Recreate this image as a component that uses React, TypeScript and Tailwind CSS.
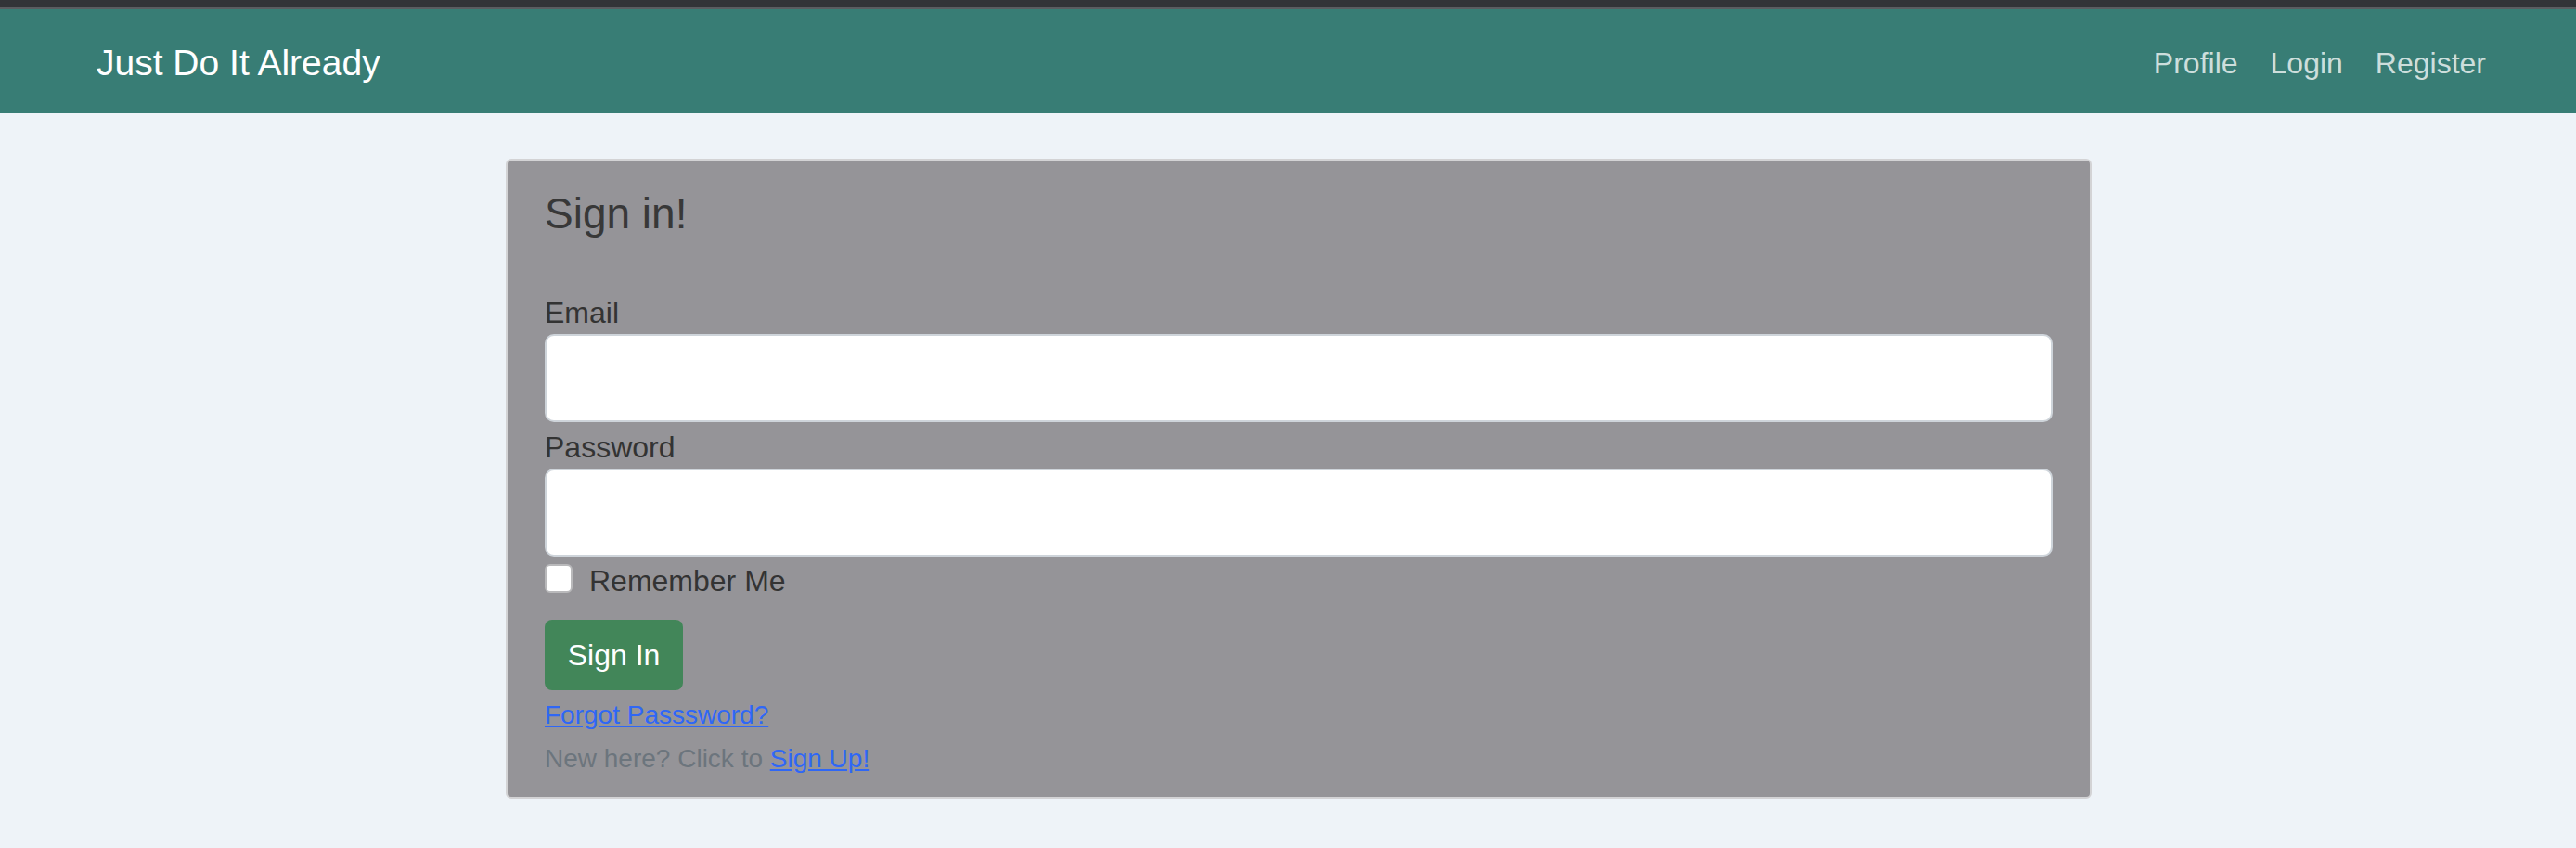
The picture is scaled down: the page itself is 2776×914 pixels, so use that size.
import React, { useState } from "react";

export default function App() {
  const [remember, setRemember] = useState(false);

  return (
    <div
      className="min-h-screen bg-[#eef3f8] text-[#333333]"
      style={{ fontFamily: '"Liberation Sans", Arial, sans-serif' }}
    >
      {/* top strip + navbar */}
      <div className="h-[8px] bg-[#323438]" />
      <div className="h-[2px] bg-[#5a5d61]" />
      <nav className="flex h-[112px] items-center justify-between bg-[#387d75] pt-[4px] pl-[104px] pr-[97px]">
        <a href="#" className="text-[39px] leading-[60px] text-white">
          Just Do It Already
        </a>
        <div className="flex gap-[35px] text-[32px] leading-[48px] text-white/75">
          <a href="#">Profile</a>
          <a href="#">Login</a>
          <a href="#">Register</a>
        </div>
      </nav>

      {/* sign in card */}
      <div className="ml-[545px] mt-[49px] w-[1709px] rounded-[6px] border-2 border-[#d3d3d5] bg-[#959498] px-[40px] pt-[29px] pb-[20px]">
        <h4 className="text-[46px] leading-[56px] text-[#383838]">Sign in!</h4>

        <form className="flex flex-col" onSubmit={(e) => e.preventDefault()}>
          <label className="mt-[56px] text-[32px] leading-[46px]">Email</label>
          <input
            type="email"
            className="h-[95px] w-full rounded-[10px] border-2 border-[#ced4da] bg-white px-[24px] text-[40px] outline-none"
          />

          <label className="mt-[4px] text-[32px] leading-[46px]">Password</label>
          <input
            type="password"
            className="h-[95px] w-full rounded-[10px] border-2 border-[#ced4da] bg-white px-[24px] text-[40px] outline-none"
          />

          <div className="mt-[3px] flex h-[46px] items-start gap-[18px]">
            <button
              type="button"
              onClick={() => setRemember(!remember)}
              className="mt-[5px] h-[31px] w-[30px] rounded-[6px] border-2 border-[#b9b9bb] bg-white"
            />
            <span className="text-[32px] leading-[46px]">Remember Me</span>
          </div>

          <button
            type="submit"
            className="mt-[19px] flex h-[76px] w-[149px] items-center justify-center rounded-[8px] bg-[#428659] text-[32px] text-white"
          >
            Sign In
          </button>

          <a href="#" className="mt-[6px] self-start text-[28px] leading-[42px] text-[#2f67f6] underline">
            Forgot Passsword?
          </a>
          <p className="mt-[5px] text-[28px] leading-[42px] text-[#6c757d]">
            New here? Click to{" "}
            <a href="#" className="text-[#2f67f6] underline">
              Sign Up!
            </a>
          </p>
        </form>
      </div>
    </div>
  );
}
